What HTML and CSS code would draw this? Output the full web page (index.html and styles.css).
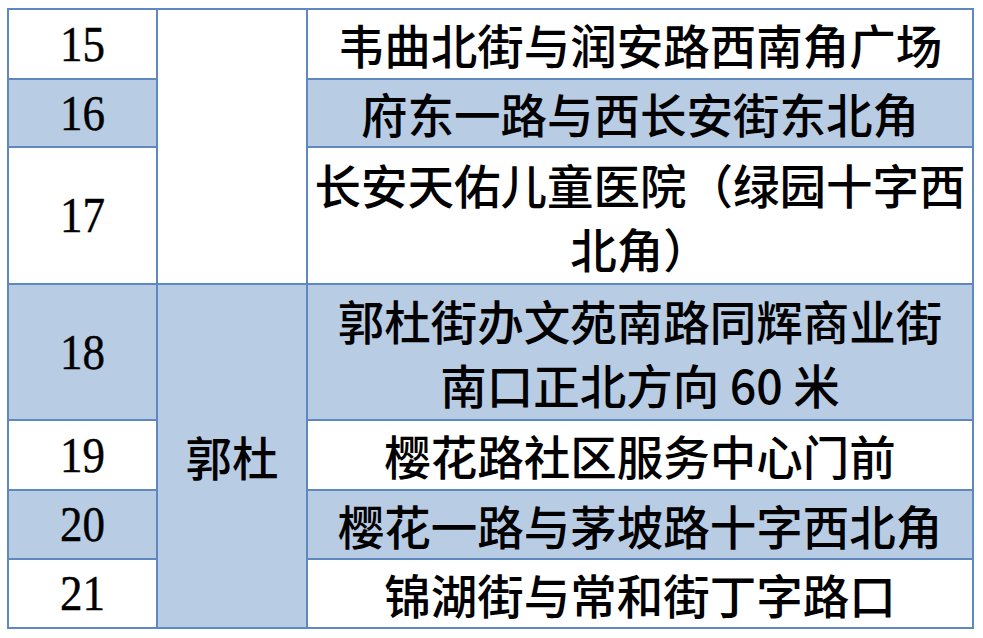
FILE: index.html
```html
<!DOCTYPE html>
<html lang="zh-CN">
<head>
<meta charset="utf-8">
<title>点位表</title>
<link rel="stylesheet" href="styles.css">
</head>
<body>
<table class="grid">
  <colgroup>
    <col class="c-num">
    <col class="c-area">
    <col class="c-addr">
  </colgroup>
  <tbody>
    <tr class="r1">
      <td class="num"><span class="digits">15</span></td>
      <td class="area" rowspan="3"></td>
      <td class="addr">韦曲北街与润安路西南角广场</td>
    </tr>
    <tr class="r2 blue">
      <td class="num"><span class="digits">16</span></td>
      <td class="addr">府东一路与西长安街东北角</td>
    </tr>
    <tr class="r3">
      <td class="num"><span class="digits">17</span></td>
      <td class="addr">长安天佑儿童医院（绿园十字西<br>北角）</td>
    </tr>
    <tr class="r4 blue">
      <td class="num"><span class="digits">18</span></td>
      <td class="area blue-cell" rowspan="4">郭杜</td>
      <td class="addr">郭杜街办文苑南路同辉商业街<br>南口正北方向 60 米</td>
    </tr>
    <tr class="r5">
      <td class="num"><span class="digits">19</span></td>
      <td class="addr">樱花路社区服务中心门前</td>
    </tr>
    <tr class="r6 blue">
      <td class="num"><span class="digits">20</span></td>
      <td class="addr">樱花一路与茅坡路十字西北角</td>
    </tr>
    <tr class="r7">
      <td class="num"><span class="digits">21</span></td>
      <td class="addr">锦湖街与常和街丁字路口</td>
    </tr>
  </tbody>
</table>
</body>
</html>
```

FILE: styles.css
```css
html, body {
  margin: 0;
  padding: 0;
  background: #ffffff;
}

body {
  padding: 8px 0 0 7px;
}

.grid {
  border-collapse: collapse;
  table-layout: fixed;
  width: 965px;
  color: #000;
}

.c-num { width: 149px; }
.c-area { width: 150px; }
.c-addr { width: 666px; }

.grid td {
  border: 2px solid #5f87c0;
  padding: 0;
  text-align: center;
  vertical-align: middle;
  background: #ffffff;
  white-space: nowrap;
}

.grid tr.blue td,
.grid td.blue-cell {
  background: #b8cce4;
}

.grid tr.blue td.area:not(.blue-cell) {
  background: #ffffff;
}

.num {
  font-family: "Liberation Serif", "Times New Roman", serif;
  font-size: 45px;
  line-height: 1;
}

.digits {
  display: inline-block;
  transform: scaleY(1.12);
  -webkit-text-stroke: 0.4px #000;
}

.area,
.addr {
  font-family: "Noto Sans CJK SC", "Noto Sans CJK JP", sans-serif;
  font-weight: 500;
  font-size: 46.5px;
  line-height: 64px;
}

.r1 { height: 70px; }
.r2 { height: 68px; }
.r3 { height: 137px; }
.r4 { height: 136px; }
.r5 { height: 70px; }
.r6 { height: 69px; }
.r7 { height: 69px; }
```
